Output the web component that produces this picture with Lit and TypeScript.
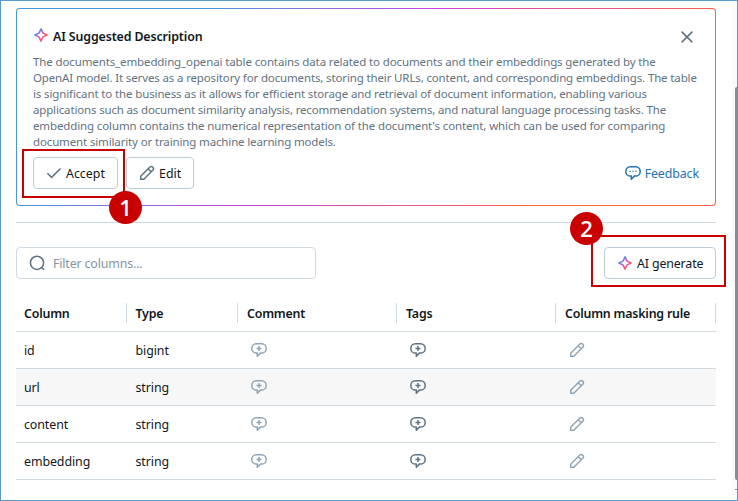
import { LitElement, html, css, svg } from "lit";
import { customElement } from "lit/decorators.js";
import { classMap } from "lit/directives/class-map.js";

const sparkle = (id: string) => html`<svg class="spark" width="14" height="14" viewBox="0 0 14 14">
  <defs><linearGradient id=${id} x1="0" y1="0" x2="1" y2="1">
    <stop offset="0.2" stop-color="#4299e0"></stop><stop offset="0.47" stop-color="#ca42e0"></stop><stop offset="0.8" stop-color="#ff5f46"></stop>
  </linearGradient></defs>
  <path d="M7 .9 8.6 4.4Q8.9 5.1 9.6 5.4L13.1 7 9.6 8.6Q8.9 8.9 8.6 9.6L7 13.1 5.4 9.6Q5.1 8.9 4.4 8.6L.9 7 4.4 5.4Q5.1 5.1 5.4 4.4Z" fill="none" stroke="url(#${id})" stroke-width="1.5" stroke-linejoin="round"></path></svg>`;

const pencil = html`<svg class="pencil" width="16" height="16" viewBox="0 0 16 16" fill="none" stroke="currentColor" stroke-width="1.45" stroke-linejoin="round">
  <path d="M1.7 14.3V11.2L10.9 2Q12.4 .9 13.8 2.2 15.1 3.6 14 5.1L4.8 14.3ZM9.2 3.7 12.3 6.8"></path></svg>`;

const bubble = (inner: unknown) => html`<svg class="bubble" width="16" height="16" viewBox="0 0 16 16" fill="none" stroke="currentColor" stroke-width="1.5">
  <path d="M5.5 1.7H10.5A4.7 4.7 0 0 1 10.5 11.1H9.4L6.3 14.2V11.1H5.5A4.7 4.7 0 0 1 5.5 1.7Z" stroke-linejoin="round"></path>${inner}</svg>`;
const plus = svg`<path d="M8 3.9V8.9M5.5 6.4H10.5"></path>`;
const dots = svg`<path d="M4.5 6.4H5.7M7.4 6.4H8.6M10.3 6.4H11.5" stroke-width="1.2"></path>`;

const description: [string, number][] = [
  ["The documents_embedding_openai table contains data related to documents and their embeddings generated by the", -0.12],
  ["OpenAI model. It serves as a repository for documents, storing their URLs, content, and corresponding embeddings. The table", -0.14],
  ["is significant to the business as it allows for efficient storage and retrieval of document information, enabling various", -0.128],
  ["applications such as document similarity analysis, recommendation systems, and natural language processing tasks. The", -0.158],
  ["embedding column contains the numerical representation of the document's content, which can be used for comparing", -0.124],
  ["document similarity or training machine learning models.", -0.14],
];

const columns = [
  { name: "id", type: "bigint" },
  { name: "url", type: "string" },
  { name: "content", type: "string" },
  { name: "embedding", type: "string" },
];

@customElement("app-root")
export class AppRoot extends LitElement {
  static styles = css`
    :host, * { box-sizing: border-box; }
    :host { display: block; position: relative; width: 738px; height: 501px; overflow: hidden; background: #fff;
      border: 1px solid #5b9bcb; font: 12.4px/20px "Noto Sans", "Open Sans", sans-serif; color: #11171c; }
    svg { display: block; flex: none; }
    .page { padding: 7px 21px 0 15px; display: flex; flex-direction: column; }
    .card { height: 198px; border: 1px solid transparent; border-radius: 4px; padding: 17px 16px 0;
      background: linear-gradient(#fff, #fff) padding-box,
        linear-gradient(135deg, #4299e0 20.5%, #ca42e0 46.9%, #ff5f46 79.5%) border-box; }
    .head { display: flex; align-items: center; height: 21px; margin-bottom: 7px; }
    .title { margin-left: 5px; font-weight: 600; flex: 1; letter-spacing: -0.12px; }
    .head .spark { margin: -3px 0 0 1px; }
    .close { margin: 0 6px 0 0; }
    .line { font-size: 11.5px; line-height: 16px; color: #5f7281; white-space: nowrap; }
    .actions { display: flex; align-items: center; margin-top: 7px; gap: 8px; }
    .btn { display: flex; align-items: center; height: 32px; border: 1px solid #c0cdd8; border-radius: 4px; background: #fff; white-space: nowrap; }
    .btn svg { color: #5f7281; }
    .btn span, .feedback span, .filter span { padding-top: 2px; }
    .accept { width: 85px; padding-left: 12px; gap: 4px; }
    .edit { width: 68px; padding-left: 12px; gap: 4px; }
    .feedback { display: flex; align-items: center; gap: 4px; margin-left: auto; color: #2272b4; letter-spacing: -0.1px; }
    .rule { height: 1px; background: #d1d9e1; margin-top: 16px; }
    .tools { display: flex; justify-content: space-between; margin-top: 24px; }
    .filter { width: 300px; height: 32px; border: 1px solid #d1d9e1; border-radius: 4px; display: flex; align-items: center; padding-left: 12px; gap: 8px; color: #8396a5; letter-spacing: -0.15px; }
    .generate { width: 112px; padding-left: 13px; gap: 5px; letter-spacing: -0.14px; }
    .table { margin-top: 16px; }
    .row { display: grid; grid-template-columns: 111px 111px 159px 159px 160px; height: 37px; border-bottom: 1px solid #d1d9e1; align-items: center; }
    .row.shaded { background: #f7f7f7; }
    .cell { padding: 2px 0 0 8px; letter-spacing: -0.08px; }
    .cell + .cell { padding-left: 9px; }
    .cell:nth-child(2) { padding-left: 8.5px; }
    .header { font-weight: 600; }
    .row.header .cell { height: 20px; line-height: 20px; padding-top: 1px; border-right: 1px solid #d1d9e1; letter-spacing: -0.2px; }
    .row .cell.icon { padding: 0 0 0 13px; color: #91a4b3; }
    .row .cell.strong { color: #5f7281; }
    .mark { position: absolute; border: 2px solid #c80000; }
    .mark1 { left: 21px; top: 148px; width: 103px; height: 49px; }
    .mark2 { left: 590px; top: 234px; width: 135px; height: 52px; }
    .badge { position: absolute; width: 33px; height: 33px; border-radius: 50%; background: #c80000; color: #fff;
      font: 600 22px/33px "Open Sans", sans-serif; text-align: center; }
    .badge1 { left: 108px; top: 190px; }
    .badge2 { left: 569px; top: 211px; }
    .gutter { position: absolute; right: 0; top: 0; width: 5px; height: 499px; background: #fafafa; }
    .thumb { position: absolute; right: 0; top: 86px; width: 2px; height: 393px; background: #8b8b8b; border-radius: 2px 0 0 2px; }
    .arrow { position: absolute; right: 0; top: 488px; width: 2px; height: 1px; background: #8b8b8b; }
  `;

  render() {
    return html`
      <div class="page">
        <div class="card">
          <div class="head">${sparkle("g1")}<span class="title">AI Suggested Description</span>
            <svg class="close" width="12" height="12" viewBox="0 0 12 12"><path d="M.6.6 11.4 11.4M11.4.6.6 11.4" stroke="#5f7281" stroke-width="1.5"></path></svg>
          </div>
          ${description.map(([text, spacing]) => html`<div class="line" style="letter-spacing:${spacing}px">${text}</div>`)}
          <div class="actions">
            <div class="btn accept"><svg width="16" height="16" viewBox="0 0 16 16"><path d="M1.4 8.2 5.6 12.4 14.5 3.5" fill="none" stroke="currentColor" stroke-width="1.5"></path></svg><span>Accept</span></div>
            <div class="btn edit">${pencil}<span>Edit</span></div>
            <div class="feedback">${bubble(dots)}<span>Feedback</span></div>
          </div>
        </div>
        <div class="rule"></div>
        <div class="tools">
          <div class="filter"><svg width="16" height="16" viewBox="0 0 16 16" fill="none" stroke="#5f7281" stroke-width="1.5"><circle cx="8" cy="7.8" r="6.6"></circle><path d="M12.4 12.2 15 14.8"></path></svg><span>Filter columns...</span></div>
          <div class="btn generate">${sparkle("g2")}<span>AI generate</span></div>
        </div>
        <div class="table">
          <div class="row header">${["Column", "Type", "Comment", "Tags", "Column masking rule"].map((h) => html`<div class="cell">${h}</div>`)}</div>
          ${columns.map((c, i) => html`<div class=${classMap({ row: true, shaded: i === 1 })}>
            <div class="cell">${c.name}</div><div class="cell">${c.type}</div>
            <div class="cell icon">${bubble(plus)}</div><div class="cell icon strong">${bubble(plus)}</div>
            <div class="cell icon">${pencil}</div></div>`)}
        </div>
      </div>
      <div class="gutter"></div><div class="thumb"></div><div class="arrow"></div>
      <div class="mark mark1"></div><div class="badge badge1">1</div>
      <div class="mark mark2"></div><div class="badge badge2">2</div>`;
  }
}
